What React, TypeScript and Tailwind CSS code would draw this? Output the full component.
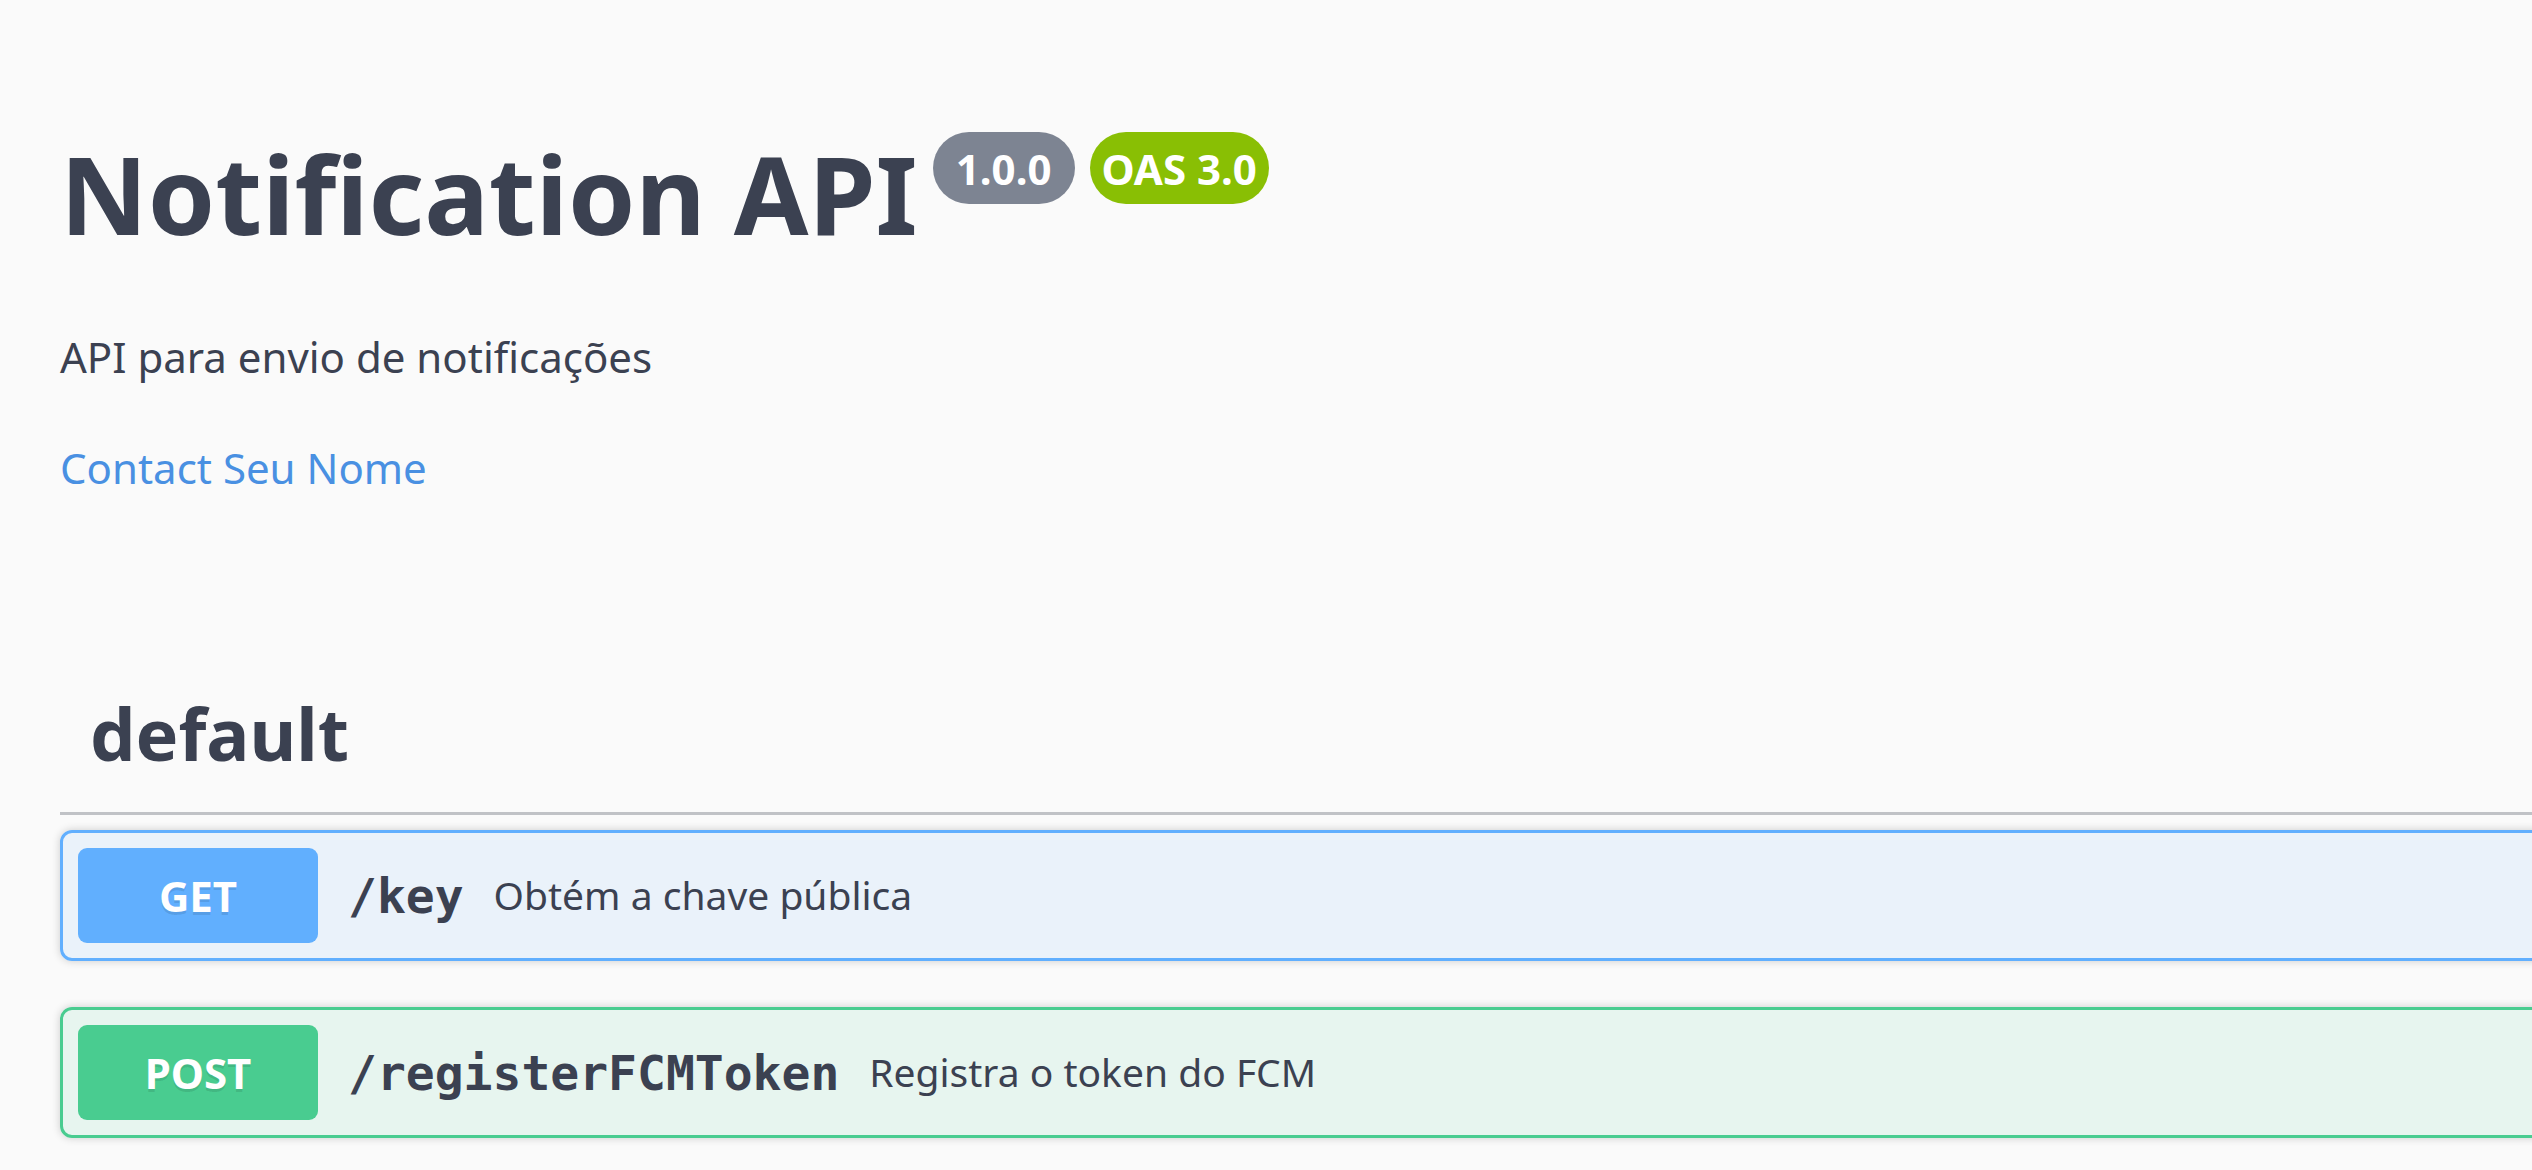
const operations = [
  {
    method: "GET",
    path: "/key",
    summary: "Obtém a chave pública",
    card: "border-[#61affe] bg-[rgba(97,175,254,0.1)]",
    badge: "bg-[#61affe]",
  },
  {
    method: "POST",
    path: "/registerFCMToken",
    summary: "Registra o token do FCM",
    card: "border-[#49cc90] bg-[rgba(73,204,144,0.1)]",
    badge: "bg-[#49cc90]",
  },
];

function InfoHeader() {
  return (
    <div className="pt-[120px]">
      <div className="flex items-start">
        <h2 className="text-[108px] font-bold leading-[147px] text-[#3b4151]">Notification API</h2>
        <span className="ml-[15px] mt-[12px] flex h-[72px] w-[142px] items-center justify-center rounded-full bg-[#7d8492] text-[42px] font-bold text-white">
          1.0.0
        </span>
        <span className="ml-[15px] mt-[12px] flex h-[72px] w-[179px] items-center justify-center rounded-full bg-[#89bf04] text-[42px] font-bold text-white">
          OAS 3.0
        </span>
      </div>
      <p className="mt-[61px] text-[42px] leading-[57px] text-[#3b4151]">API para envio de notificações</p>
      <a href="#" className="mt-[54px] block text-[42px] leading-[57px] text-[#4990e2]">
        Contact Seu Nome
      </a>
    </div>
  );
}

export default function App() {
  return (
    <div className="min-h-screen w-full overflow-hidden bg-[#fafafa] font-['Noto_Sans',sans-serif]">
      <div className="w-[2700px] px-[60px]">
        <InfoHeader />

        <section className="mt-[158px]">
          <h3 className="border-b-[3px] border-[rgba(59,65,81,0.3)] py-[30px] pl-[30px] text-[72px] font-bold leading-[98px] text-[#3b4151]">
            default
          </h3>

          <div className="mt-[15px] flex flex-col gap-[46px]">
            {operations.map((op) => (
              <div
                key={op.path}
                className={`flex items-center rounded-[12px] border-[3px] p-[15px] shadow-[0_0_9px_rgba(0,0,0,0.19)] ${op.card}`}
              >
                <span
                  className={`flex h-[95px] w-[240px] items-center justify-center rounded-[9px] text-[42px] font-bold text-white [text-shadow:0_3px_0_rgba(0,0,0,0.1)] ${op.badge}`}
                >
                  {op.method}
                </span>
                <span className="px-[30px] font-['DejaVu_Sans_Mono',monospace] text-[48px] font-semibold text-[#3b4151]">
                  {op.path}
                </span>
                <span className="text-[39px] text-[#3b4151]">{op.summary}</span>
              </div>
            ))}
          </div>
        </section>
      </div>
    </div>
  );
}
